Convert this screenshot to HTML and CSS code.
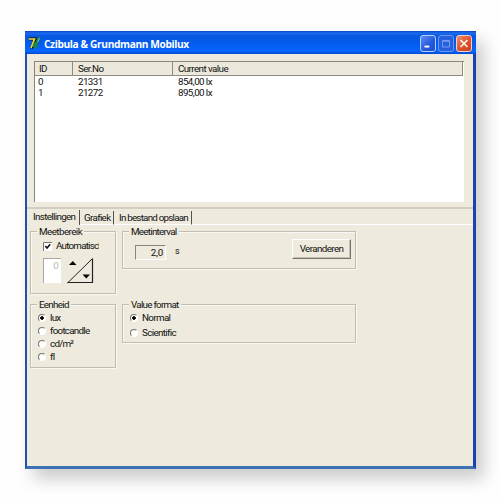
FILE: index.html
```html
<!DOCTYPE html>
<html lang="nl">
<head>
<meta charset="utf-8">
<title>Czibula &amp; Grundmann Mobilux</title>
<link rel="stylesheet" href="styles.css">
</head>
<body>
<main class="window">
  <header class="titlebar">
    <svg class="app-icon" width="13" height="13" viewBox="0 0 13 13">
      <path d="M1 2h6L3.500 11.500" fill="none" stroke="#101808" stroke-width="3"/>
      <path d="M.8 2h5.700L3 11" fill="none" stroke="#e9dc45" stroke-width="1.700"/>
      <path d="M12 1c-2-.3-2 1-2.400 3L8.500 9.500C6 11 5 8.500 6.500 7S9 6 9 7" fill="none" stroke="#1d8a3c" stroke-width="1.900"/>
      <path d="M11.500 1.300 9.700 5" stroke="#9ee45a" stroke-width=".8"/>
    </svg>
    <h1>Czibula &amp; Grundmann Mobilux</h1>
    <div class="controls">
      <span class="ctl"><svg viewBox="0 0 16 16"><path d="M4 11.500h5.500" stroke="#fff" stroke-width="2.200"/></svg></span>
      <span class="ctl disabled"><svg viewBox="0 0 16 16"><path d="M4 4.500h8v7.500h-8zM4 5.500h8" fill="none" stroke="#7fa5f4" stroke-width="1"/></svg></span>
      <span class="ctl close"><svg viewBox="0 0 16 16"><path d="m4 4 8 8m0-8-8 8" stroke="#fff" stroke-width="1.800"/></svg></span>
    </div>
  </header>
  <section class="list">
    <div class="row head"><span>ID</span><span>Ser.No</span><span>Current value</span></div>
    <div class="row"><span>0</span><span>21331</span><span>854,00 lx</span></div>
    <div class="row"><span>1</span><span>21272</span><span>895,00 lx</span></div>
  </section>
  <nav class="tabs">
    <span class="tab active">Instellingen</span><span class="tab grafiek">Grafiek</span><span class="tab opslaan">In bestand opslaan</span><span class="rest"></span>
  </nav>
  <section class="panel">
    <div class="group range">
      <h2>Meetbereik</h2>
      <label class="auto"><svg class="check" viewBox="0 0 9 9"><path d="M0 0h9v9H0z" fill="#fff"/><path d="M.5 9V.5H9" fill="none" stroke="#77756b"/><path d="m2.300 4 1.700 2 3.200-3.700" fill="none" stroke="#111" stroke-width="1.600"/></svg><span>Automatisch</span></label>
      <div class="stepper">
        <span class="zero">0</span>
        <svg width="27" height="26" viewBox="0 0 27 26">
          <path d="M.5 25 25 1" fill="none" stroke="#222" stroke-width="1"/>
          <path d="M.5 24.500h25V.5" fill="none" stroke="#222" stroke-width="1.200"/>
          <path d="M2 7 5.800 3 9.500 7zM15.500 16.500h7.500l-3.700 4z" fill="#000"/>
        </svg>
      </div>
    </div>
    <div class="group interval">
      <h2>Meetinterval</h2>
      <span class="field">2,0</span><span class="unit">s</span>
      <button>Veranderen</button>
    </div>
    <div class="group units">
      <h2>Eenheid</h2>
      <label><i class="radio on"></i>lux</label>
      <label><i class="radio"></i>footcandle</label>
      <label><i class="radio"></i>cd/m²</label>
      <label><i class="radio"></i>fl</label>
    </div>
    <div class="group format">
      <h2>Value format</h2>
      <label><i class="radio on"></i>Normal</label>
      <label><i class="radio"></i>Scientific</label>
    </div>
  </section>
</main>
</body>
</html>
```
FILE: styles.css
```css
* { box-sizing: border-box; }
body {
  margin: 0;
  width: 500px;
  height: 500px;
  padding: 31px 24px 31px 25px;
  overflow: hidden;
  background: #fefefe;
  font: 9.8px/12px Roboto, "Liberation Sans", sans-serif;
  letter-spacing: -.66px;
  color: #111;
}
.window {
  width: 451px;
  height: 438px;
  background: #eeeade;
  border: solid #1743ae;
  border-width: 0 3px 3px 2px;
  border-left-color: #1d52aa;
  border-bottom-color: #3e70b4;
  box-shadow: 8px 10px 16px rgba(0, 0, 0, .2);
}
.titlebar {
  display: flex;
  align-items: center;
  height: 23px;
  margin: 0 -3px 0 -2px;
  padding: 2px 4px 0 3px;
  background: linear-gradient(#0a3fbe 0, #1d6cf0 2px, #0757df 5px, #045bf0 13px, #0567fc 20px, #0349cf 23px);
}
.app-icon { flex: none; }
h1 {
  margin: 0 0 0 3px;
  flex: 1;
  font: bold 10.2px/14px "Open Sans", sans-serif;
  letter-spacing: -.38px;
  color: #fff;
  white-space: nowrap;
}
.controls { display: flex; gap: 2px; }
.ctl {
  width: 16px;
  height: 17px;
  border: 1px solid #b6cdfa;
  border-radius: 3px;
  background: linear-gradient(135deg, #5b8ef4, #2459dc 60%, #1c50cc);
}
.ctl svg { display: block; width: 14px; height: 15px; }
.disabled { border-color: #6b97f3; background: #2560df; }
.close { border-color: #f2cfc4; background: linear-gradient(135deg, #ec8c6d, #df5128 55%, #c93f1a); }

.list {
  width: 430px;
  height: 141px;
  margin: 7px 0 0 7px;
  background: #fff;
  border-left: 1px solid #88867c;
  border-top: 1px solid #88867c;
}
.row { display: grid; grid-template-columns: 38px 100px 1fr; height: 11px; line-height: 12px; letter-spacing: -.58px; }
.row span { padding-left: 4px; }
.row span + span { padding-left: 5px; }
.row:not(.head) span { padding-left: 3px; }
.row:not(.head) span + span { padding-left: 5px; }
.head {
  width: 428px;
  height: 14px;
  line-height: 14px;
  background: #ece9dc;
  border-bottom: 1px solid #8d8b80;
}
.head span { border-right: 1px solid #8d8b80; }

.tabs {
  display: flex;
  height: 18px;
  margin-top: 5px;
  border-top: 2px solid #d0cec0;
  line-height: 14px;
}
.tab {
  height: 14px;
  margin-top: 2px;
  border-right: 1px solid #55534b;
  padding-left: 5px;
  white-space: nowrap;
}
.active { width: 53px; margin-top: 1px; padding-left: 6px; height: 15px; }
.grafiek { width: 34px; padding-left: 4px; }
.opslaan { width: 78px; letter-spacing: -.77px; }
.grafiek, .opslaan { border-bottom: 1px solid #fff; }
.rest { flex: 1; border-bottom: 1px solid #fff; }

.panel {
  display: grid;
  grid-template-columns: 86px 234px;
  grid-template-rows: 63px 64px;
  gap: 10px 6px;
  padding: 6px 0 0 3px;
  align-items: start;
}
.group {
  border: 1px solid #c1beb1;
  box-shadow: 1px 1px #faf8f0, inset 1px 1px #faf8f0;
}
h2 {
  width: max-content;
  margin: -6px 0 0 6px;
  padding: 0 2px;
  background: #eeeade;
  font: inherit;
  line-height: 11px;
}
.range { height: 63px; }
.range h2 { letter-spacing: -.55px; }
.auto { display: flex; align-items: center; height: 12px; margin: 3px 0 0 12px; letter-spacing: -.78px; }
.auto span { width: 43px; margin-left: 4px; overflow: hidden; white-space: nowrap; }
.check { width: 9px; height: 9px; flex: none; }
.stepper { display: flex; margin: 6px 0 0 12px; }
.zero {
  width: 18px;
  height: 25px;
  margin-right: 6px;
  padding: 1px 3px 0 0;
  background: #fff;
  border-left: 1px solid #aaa89e;
  border-top: 1px solid #aaa89e;
  color: #bbb9b2;
  text-align: right;
}
.interval { display: flex; height: 38px; position: relative; }
.interval h2 { position: absolute; top: 0; left: 0; }
.interval h2, .format h2 { letter-spacing: -.8px; }
.interval h2 { letter-spacing: -.8px; }
.interval h2, .format h2 { letter-spacing: -.72px; }
.field {
  width: 31px;
  height: 15px;
  margin: 13px 0 0 12px;
  border: 1px solid;
  border-color: #88867c #fff #fff #88867c;
  padding-right: 2px;
  line-height: 14px;
  letter-spacing: -.2px;
  text-align: right;
}
.unit { margin: 13px 0 0 9px; font-size: 9px; }
button {
  width: 59px;
  height: 20px;
  margin: 7px 4px 0 auto;
  padding: 0;
  border: 1px solid;
  border-color: #fff #77756b #77756b #fff;
  background: #eeeade;
  box-shadow: inset -1px -1px #c4c1b4;
  font: inherit;
  letter-spacing: -.6px;
  color: #111;
}
.units { height: 64px; }
.format { height: 39px; }
.units label, .format label { display: flex; align-items: center; height: 13px; }
.units h2 + label, .format h2 + label { margin-top: 1px; }
.units label, .format label { padding-left: 7px; }
.format label + label { margin-top: 2px; }
.units label { letter-spacing: -.73px; }
.format label { letter-spacing: -.65px; }
.radio {
  width: 8px;
  height: 8px;
  margin-right: 4px;
  border: 1px solid;
  border-color: #77756b #fff #fff #77756b;
  border-radius: 50%;
  background: #fff;
}
.on { background: radial-gradient(circle, #000 0 1.500px, #fff 2px); }
```
